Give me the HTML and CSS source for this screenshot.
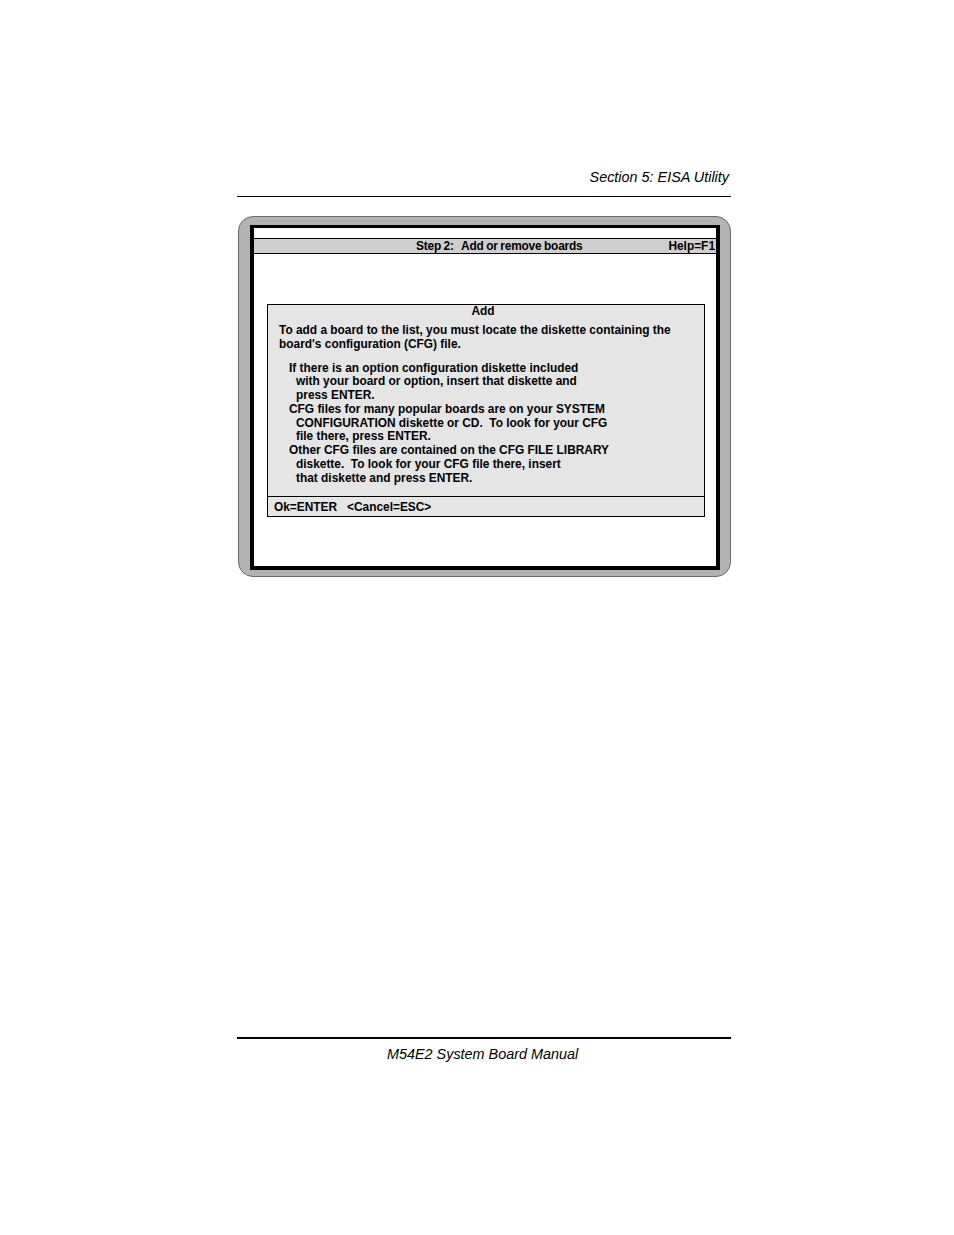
FILE: index.html
```html
<!DOCTYPE html>
<html>
<head>
<meta charset="utf-8">
<title>Section 5: EISA Utility</title>
<link rel="stylesheet" href="styles.css">
</head>
<body>
<div class="page">
  <header class="running-head">Section 5: EISA Utility</header>
  <div class="bezel">
    <div class="screen">
      <div class="titlebar">
        <span class="title">Step 2:   Add or remove boards</span>
        <span class="help">Help=F1</span>
      </div>
      <div class="dialog">
        <div class="dialog-body">
          <div class="dialog-title">Add</div>
          <p class="intro">To add a board to the list, you must locate the diskette containing the<br>board's configuration (CFG) file.</p>
          <ul class="options">
            <li>If there is an option configuration diskette included<br><span class="cont">with your board or option, insert that diskette and</span><br><span class="cont">press ENTER.</span></li>
            <li>CFG files for many popular boards are on your SYSTEM<br><span class="cont">CONFIGURATION diskette or CD.&nbsp; To look for your CFG</span><br><span class="cont">file there, press ENTER.</span></li>
            <li>Other CFG files are contained on the CFG FILE LIBRARY<br><span class="cont">diskette.&nbsp; To look for your CFG file there, insert</span><br><span class="cont">that diskette and press ENTER.</span></li>
          </ul>
        </div>
        <div class="dialog-foot">Ok=ENTER&nbsp;&nbsp; &lt;Cancel=ESC&gt;</div>
      </div>
    </div>
  </div>
  <footer class="running-foot">M54E2 System Board Manual</footer>
</div>
</body>
</html>
```

FILE: styles.css
```css
html, body {
  margin: 0;
  padding: 0;
  background: #ffffff;
}
.page {
  width: 494px;
  margin-left: 237px;
  padding-top: 169px;
  font-family: "Liberation Sans", Arial, sans-serif;
  color: #000;
}
.running-head {
  font-style: italic;
  font-size: 14.4px;
  line-height: 16px;
  text-align: right;
  padding-right: 2px;
  padding-bottom: 11px;
  border-bottom: 1px solid #000;
}
.bezel {
  margin-top: 19px;
  margin-left: 1px;
  height: 361px;
  box-sizing: border-box;
  background: #b3b3b3;
  border: 1px solid #6a6a6a;
  border-radius: 15px;
  padding: 8px 10px 6px 11px;
}
.screen {
  height: 100%;
  box-sizing: border-box;
  border: 4px solid #000;
  border-top-width: 3px;
  background: #fff;
  padding-top: 10px;
}
.titlebar {
  display: flex;
  align-items: center;
  height: 14px;
  background: #cfcfcf;
  border-top: 1px solid #000;
  border-bottom: 1px solid #000;
  font-weight: bold;
  font-size: 11.9px;
  line-height: 15px;
}
.title {
  white-space: pre;
  margin-left: 162px;
  letter-spacing: -0.2px;
  word-spacing: -0.5px;
}
.help {
  margin-left: auto;
  margin-right: 1px;
}
.dialog {
  margin: 50px 11px 0 13px;
  height: 213px;
  box-sizing: border-box;
  border: 1px solid #000;
  background: #e5e5e5;
  display: flex;
  flex-direction: column;
  font-weight: bold;
  font-size: 11.9px;
}
.dialog-body {
  flex: 1;
  padding-left: 11px;
}
.dialog-title {
  text-align: center;
  line-height: 13px;
  margin-left: -17px;
}
.intro {
  margin: 6px 0 0 0;
  line-height: 13.8px;
}
.options {
  list-style: none;
  margin: 10px 0 0 0;
  padding: 0 0 0 10px;
  line-height: 13.75px;
}
.cont {
  padding-left: 7px;
}
.dialog-foot {
  border-top: 1px solid #000;
  height: 19px;
  line-height: 21px;
  padding-left: 6px;
}
.running-foot {
  margin-top: 460px;
  border-top: 2px solid #000;
  font-style: italic;
  font-size: 14.4px;
  line-height: 16px;
  padding-top: 7px;
  padding-left: 150px;
}
```
